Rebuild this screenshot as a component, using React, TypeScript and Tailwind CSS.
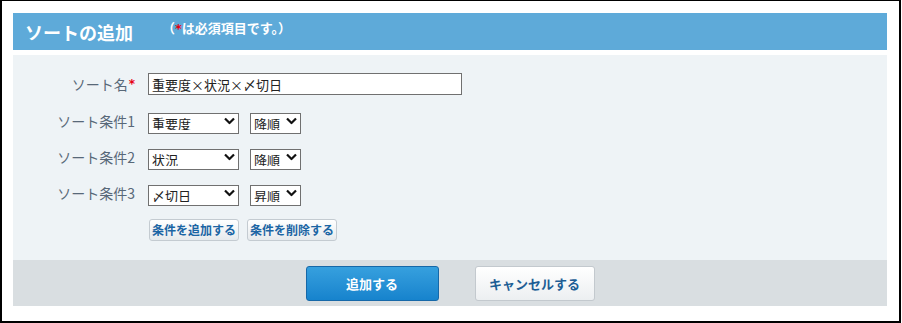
import React from "react";

const FONT = "font-['Noto_Sans_CJK_JP','Noto_Sans',sans-serif]";
const STAR = "font-['DejaVu_Sans',sans-serif] font-bold text-[#e60012]";

function Chevron() {
  return (
    <svg
      className="pointer-events-none absolute right-[4px] top-1/2 -translate-y-1/2"
      width="11"
      height="7"
      viewBox="0 0 11 7"
    >
      <path d="M1 1 L5.5 5.5 L10 1" fill="none" stroke="#111" strokeWidth="2.2" />
    </svg>
  );
}

function Select({ value, options, width }: { value: string; options: string[]; width: string }) {
  return (
    <div className={`relative h-[21px] ${width}`}>
      <select
        defaultValue={value}
        className="h-full w-full appearance-none border border-[#707070] bg-white pl-[3px] text-[13px] leading-none text-[#222] outline-none"
      >
        {options.map((o) => (
          <option key={o}>{o}</option>
        ))}
      </select>
      <Chevron />
    </div>
  );
}

const FIELDS = ["重要度", "状況", "〆切日", "登録日時", "更新日時"];
const ORDERS = ["昇順", "降順"];

const conditions = [
  { label: "ソート条件1", field: "重要度", order: "降順" },
  { label: "ソート条件2", field: "状況", order: "降順" },
  { label: "ソート条件3", field: "〆切日", order: "昇順" },
];

export default function App() {
  return (
    <div className={`h-[323px] w-[901px] border-b-2 border-l-2 border-r-2 border-t border-black bg-white pb-[15px] pl-[11px] pr-[12px] pt-[12px] ${FONT}`}>
      {/* ヘッダー */}
      <div className="flex h-[37px] items-center bg-[#5eaad9] pl-[12px]">
        <h1 className="text-[18px] font-bold leading-none text-white">ソートの追加</h1>
        <span className="ml-[29px] -mt-[8px] text-[13px] font-bold leading-none text-white">
          （<span className={`${STAR} text-[13px]`}>*</span>は必須項目です。）
        </span>
      </div>

      {/* フォーム */}
      <div className="mt-[5px] h-[205px] bg-[#eef3f6] pt-[18px]">
        <div className="flex h-[22px] items-center">
          <label className="w-[122px] text-right text-[14px] leading-none text-[#586878]">
            ソート名<span className={`${STAR} relative -top-[2px] ml-[1px] text-[12px]`}>*</span>
          </label>
          <input
            defaultValue="重要度×状況×〆切日"
            className="ml-[13px] h-[22px] w-[314px] border border-[#707070] bg-white px-[3px] text-[13px] text-[#222] outline-none"
          />
        </div>

        {conditions.map((c) => (
          <div key={c.label} className="mt-[15px] flex h-[21px] items-center">
            <label className="w-[122px] text-right text-[14px] leading-none text-[#586878]">{c.label}</label>
            <div className="ml-[13px] flex gap-[11px]">
              <Select value={c.field} options={FIELDS} width="w-[91px]" />
              <Select value={c.order} options={ORDERS} width="w-[51px]" />
            </div>
          </div>
        ))}

        <div className="ml-[136px] mt-[16px] flex gap-[8px]">
          <button className="h-[22px] w-[90px] rounded-[3px] border border-[#c4cbd1] bg-gradient-to-b from-white to-[#e6eaed] text-[12px] font-bold leading-none text-[#1b65a4]">
            条件を追加する
          </button>
          <button className="h-[22px] w-[90px] rounded-[3px] border border-[#c4cbd1] bg-gradient-to-b from-white to-[#e6eaed] text-[12px] font-bold leading-none text-[#1b65a4]">
            条件を削除する
          </button>
        </div>
      </div>

      {/* フッター */}
      <div className="flex h-[46px] items-center justify-center gap-[36px] bg-[#d9dee1]">
        <button className="h-[35px] w-[133px] rounded-[3px] border border-[#1668a8] bg-gradient-to-b from-[#36a0de] to-[#1683cd] text-[13px] font-bold leading-none text-white">
          追加する
        </button>
        <button className="h-[35px] w-[120px] rounded-[3px] border border-[#c3c9ce] bg-gradient-to-b from-white to-[#eceff1] text-[13px] font-bold leading-none text-[#1d5e95]">
          キャンセルする
        </button>
      </div>
    </div>
  );
}
